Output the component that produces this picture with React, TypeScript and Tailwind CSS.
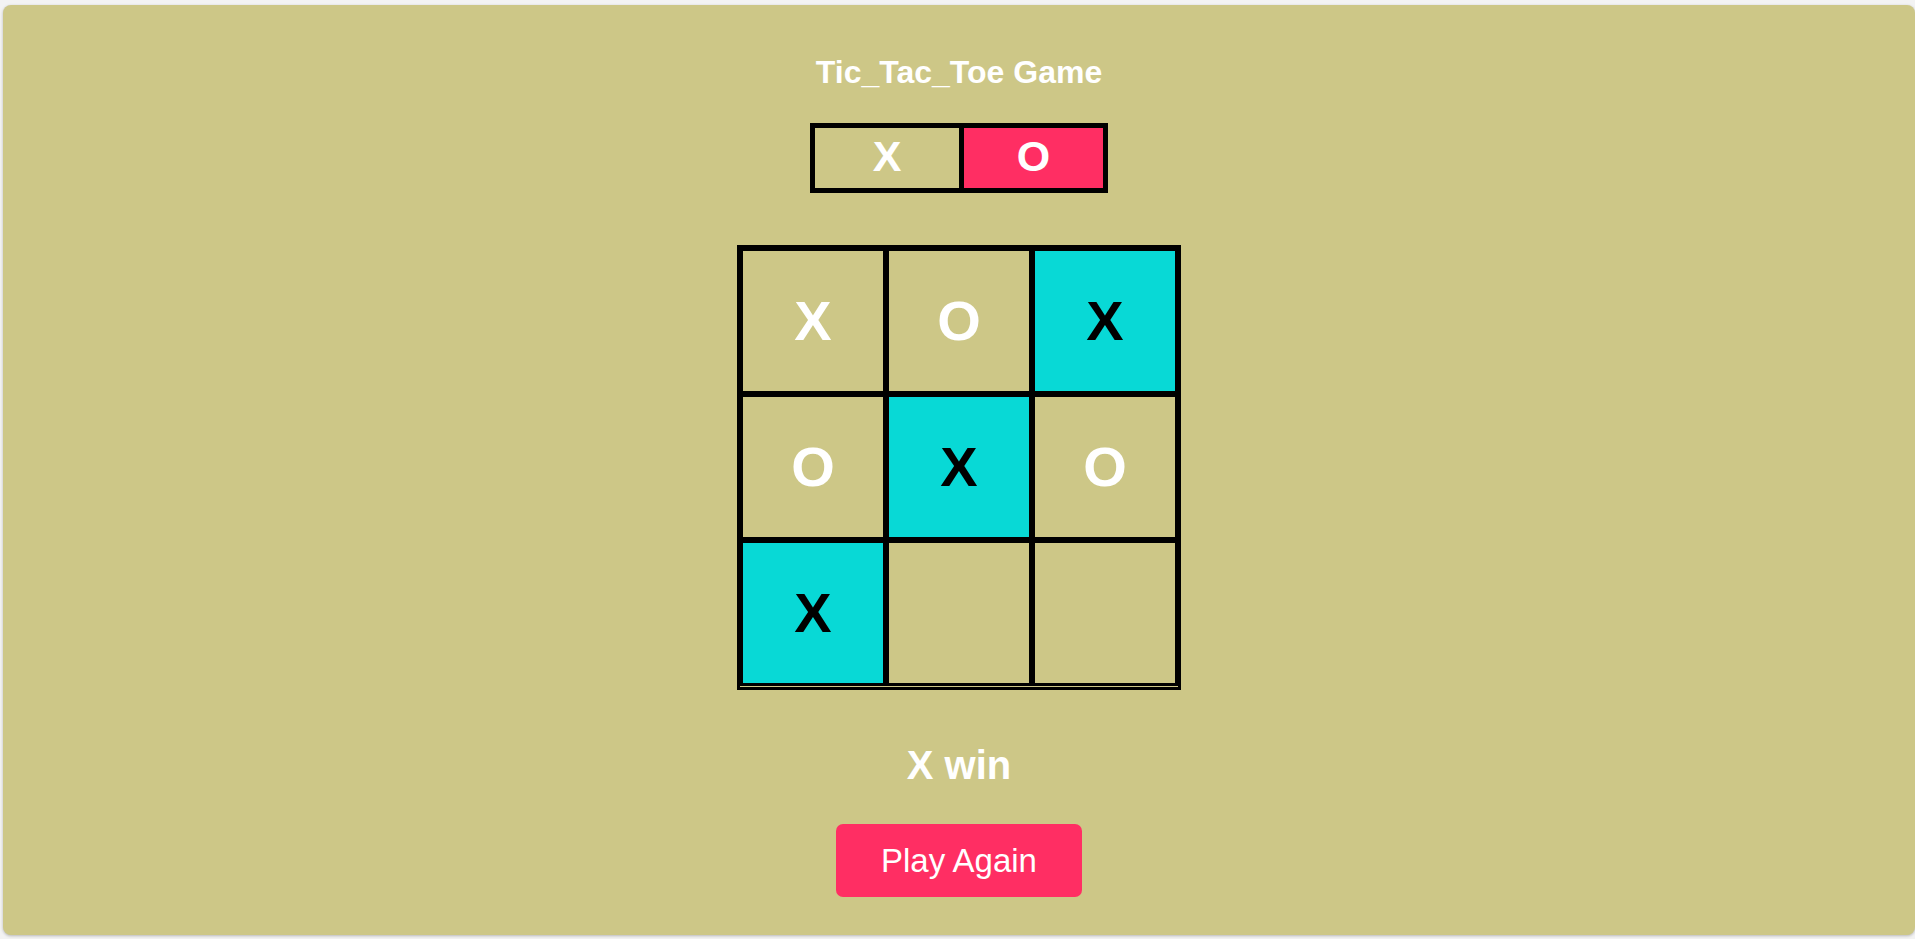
import React from "react";

const cells: { v: string; win: boolean }[] = [
  { v: "X", win: false },
  { v: "O", win: false },
  { v: "X", win: true },
  { v: "O", win: false },
  { v: "X", win: true },
  { v: "O", win: false },
  { v: "X", win: true },
  { v: "", win: false },
  { v: "", win: false },
];

export default function App() {
  return (
    <div
      className="w-full h-[939px] bg-[#f3f3f3] pt-[5px] pl-[3px] pr-0 pb-[4px] flex"
      style={{ fontFamily: '"Liberation Sans", Arial, sans-serif' }}
    >
      <div className="flex-1 bg-[#cdc787] rounded-lg shadow-[0_1px_3px_rgba(0,0,0,0.25)] flex flex-col items-center pt-[49px]">
        <h1 className="text-[32px] leading-[37px] font-bold text-white">Tic_Tac_Toe Game</h1>

        <div className="mt-[32px] flex border-[5px] border-black h-[70px]">
          <div className="w-[144px] flex items-center justify-center pb-[3px] text-[43px] font-bold text-white">
            X
          </div>
          <div className="w-[5px] bg-black" />
          <div className="w-[139px] flex items-center justify-center pb-[3px] text-[43px] font-bold text-white bg-[#ff2e63]">
            O
          </div>
        </div>

        <div className="mt-[52px] border-[3px] border-black pb-px">
          <div className="grid grid-cols-3 w-[438px]">
            {cells.map((c, i) => (
              <div
                key={i}
                className={
                  "w-[146px] h-[146px] border-[3px] border-black flex items-center justify-center text-[56px] font-bold " +
                  (c.win ? "bg-[#08d9d6] text-black" : "text-white")
                }
              >
                {c.v}
              </div>
            ))}
          </div>
        </div>

        <div className="mt-[52px] text-[40px] leading-[46px] font-bold text-white">X win</div>

        <button className="mt-[36px] w-[246px] h-[73px] rounded-[7px] bg-[#ff2e63] text-white text-[33px] flex items-center justify-center">
          Play Again
        </button>
      </div>
    </div>
  );
}
